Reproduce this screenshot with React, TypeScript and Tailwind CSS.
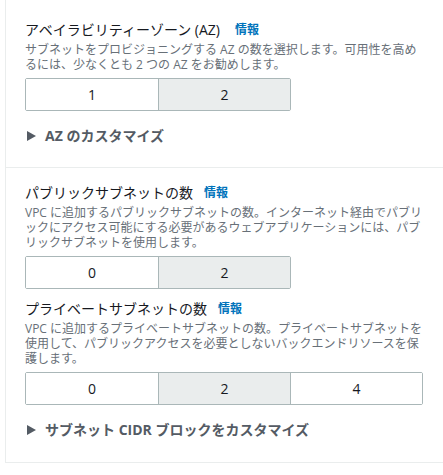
import React from "react";

const font = { fontFamily: '"Open Sans", "Noto Sans CJK JP", sans-serif' };

function Segmented({ options, selected }: { options: string[]; selected: string }) {
  return (
    <div className="flex w-fit rounded-[2px] border border-[#aab7b8]">
      {options.map((o, i) => (
        <div
          key={o}
          className={
            "flex h-[31px] w-[132px] items-center justify-center text-[14px] text-[#16191f] " +
            (i > 0 ? "border-l border-[#aab7b8] " : "") +
            (o === selected ? "bg-[#eaeded]" : "bg-white")
          }
        >
          {o}
        </div>
      ))}
    </div>
  );
}

function Field({
  title,
  desc,
  gap = "ml-[11px]",
  children,
}: {
  title: string;
  desc: string;
  gap?: string;
  children: React.ReactNode;
}) {
  return (
    <div>
      <div className="flex items-center text-[14px] leading-[20px] text-[#16191f]">
        <span>{title}</span>
        <span className={gap + " text-[12px] font-bold text-[#0073bb]"}>情報</span>
      </div>
      <p className="mt-[2px] text-[12px] leading-[15px] text-[#687078]">{desc}</p>
      <div className="mt-[6px]">{children}</div>
    </div>
  );
}

function Expander({ label }: { label: string }) {
  return (
    <div className="mt-[15px] flex items-center gap-[9px] pl-[2px] text-[14px] font-bold leading-[20px] text-[#545b64]">
      <svg width="9" height="10" viewBox="0 0 9 10">
        <path d="M0 0 L9 5 L0 10 Z" fill="#545b64" />
      </svg>
      <span>{label}</span>
    </div>
  );
}

export default function App() {
  return (
    <div className="min-h-screen bg-white pl-[5px]" style={font}>
      <div className="border-b border-l border-[#eaeded]">
        <div className="border-b border-[#eaeded] px-[19px] pb-[21px] pt-[20px]">
          <Field
            title="アベイラビリティーゾーン (AZ)"
            desc="サブネットをプロビジョニングする AZ の数を選択します。可用性を高めるには、少なくとも 2 つの AZ をお勧めします。"
            gap="ml-[15px]"
          >
            <Segmented options={["1", "2"]} selected="2" />
          </Field>
          <Expander label="AZ のカスタマイズ" />
        </div>
        <div className="px-[19px] pb-[22px] pt-[15px]">
          <Field
            title="パブリックサブネットの数"
            desc="VPC に追加するパブリックサブネットの数。インターネット経由でパブリックにアクセス可能にする必要があるウェブアプリケーションには、パブリックサブネットを使用します。"
          >
            <Segmented options={["0", "2"]} selected="2" />
          </Field>
          <div className="mt-[10px]">
            <Field
              title="プライベートサブネットの数"
              desc="VPC に追加するプライベートサブネットの数。プライベートサブネットを使用して、パブリックアクセスを必要としないバックエンドリソースを保護します。"
            >
              <Segmented options={["0", "2", "4"]} selected="2" />
            </Field>
          </div>
          <Expander label="サブネット CIDR ブロックをカスタマイズ" />
        </div>
      </div>
    </div>
  );
}
